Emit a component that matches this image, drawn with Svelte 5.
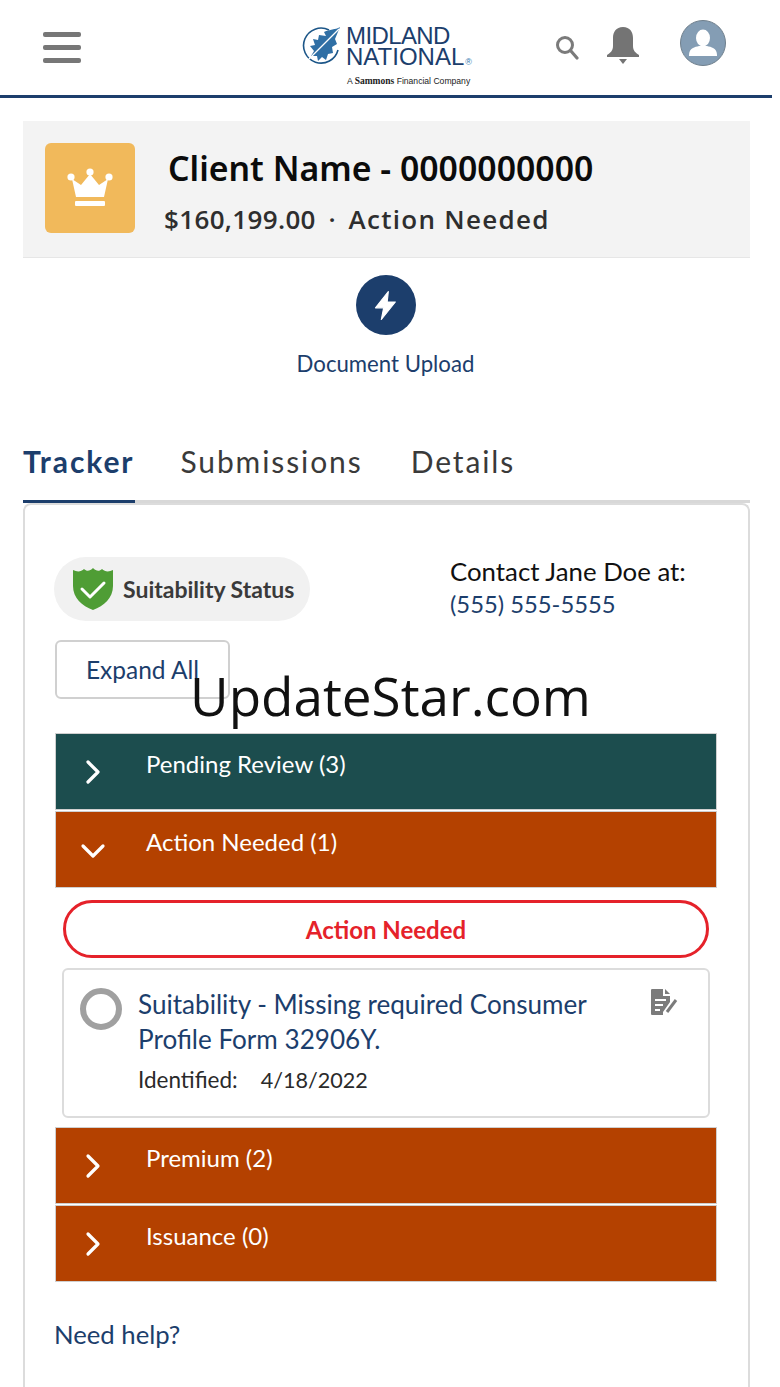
<script>
	const sections = [
		{ label: 'Pending Review (3)', tone: 'teal', open: false },
		{ label: 'Action Needed (1)', tone: 'rust', open: true },
		{ label: 'Premium (2)', tone: 'rust', open: false },
		{ label: 'Issuance (0)', tone: 'rust', open: false }
	];
</script>

<div class="page">
	<header>
		<div class="burger"><span></span><span></span><span></span></div>
		<div class="logo">
			<svg class="leaf" viewBox="0 0 40 40" width="40" height="40">
				<path d="M27 4 A17.5 17.5 0 1 0 36 24" fill="none" stroke="#1c5688" stroke-width="1.6" />
				<path d="M38 1 C33 4 28 3 22 6 L24 10 L17 9 L16 14 L11 13 L13 19 L8 20 L12 25 L9 30 L15 30 L16 35 L20 31 L24 34 L26 28 L31 27 L30 21 L35 18 L33 13Z" fill="#2f6fa5" />
				<path d="M3 37 L37 3" stroke="#fff" stroke-width="1.2" />
			</svg>
			<div class="wordmark">
				<div class="mark-line">MIDLAND</div>
				<div class="mark-line wide">NATIONAL<span class="dot">®</span></div>
				<div class="tagline">A <b>Sammons</b> Financial Company</div>
			</div>
		</div>
		<div class="tools">
			<svg class="search" viewBox="0 0 26 26" width="26" height="26">
				<circle cx="11" cy="11" r="7.5" fill="none" stroke="#7b7b7b" stroke-width="3" />
				<path d="M16.5 16.5 L23 24" stroke="#7b7b7b" stroke-width="3.2" stroke-linecap="round" />
			</svg>
			<svg class="bell" viewBox="0 0 36 40" width="36" height="40">
				<path d="M18 1 C11 1 8 6 8 12 L8 20 C8 25 5 27 2 29 L2 31 L34 31 L34 29 C31 27 28 25 28 20 L28 12 C28 6 25 1 18 1Z" fill="#747474" />
				<path d="M14 33 L22 33 L18 38Z" fill="#747474" />
			</svg>
			<svg class="avatar" viewBox="0 0 46 46" width="46" height="46">
				<circle cx="23" cy="23" r="22.5" fill="#849db4" stroke="#6f7f8c" stroke-width="1" />
				<ellipse cx="23" cy="18" rx="7" ry="8.5" fill="#fff" />
				<path d="M9 35 C9 28 15 27 19 26 L27 26 C31 27 37 28 37 35 L37 36 L9 36Z" fill="#fff" />
			</svg>
		</div>
	</header>

	<main>
		<section class="client">
			<div class="crown">
				<svg viewBox="0 0 46 40" width="46" height="40">
					<circle cx="4" cy="9" r="3.6" fill="#fff" />
					<circle cx="23" cy="4" r="3.6" fill="#fff" />
					<circle cx="42" cy="9" r="3.6" fill="#fff" />
					<path d="M5 11 L14 17 L23 6 L32 17 L41 11 L37 29 L9 29Z" fill="#fff" />
					<rect x="8" y="33" width="30" height="5" rx="1" fill="#fff" />
				</svg>
			</div>
			<div class="client-text">
				<h1>Client Name - 0000000000</h1>
				<p><span class="amount">$160,199.00</span> <span class="sep">·</span> <span class="state">Action Needed</span></p>
			</div>
		</section>

		<div class="quick">
			<div class="bolt">
				<svg viewBox="0 0 24 28" width="28" height="33">
					<path d="M14 2 L3 16 L10 16 L8 26 L20 11 L13 11Z" fill="#fff" stroke="#fff" stroke-width="1" stroke-linejoin="round" />
				</svg>
			</div>
			<div class="quick-label">Document Upload</div>
		</div>

		<nav>
			<div class="tab active">Tracker</div>
			<div class="tab">Submissions</div>
			<div class="tab">Details</div>
		</nav>

		<section class="card">
			<div class="status-row">
				<div class="pill">
					<svg viewBox="0 0 42 46" width="42" height="46">
						<path d="M21 2 C24 5 27 6 30 3 C33 6 37 6 41 4 L41 20 C41 32 32 40 21 44 C10 40 1 32 1 20 L1 4 C5 6 9 6 12 3 C15 6 18 5 21 2Z" fill="#4f9d35" />
						<path d="M10 23 L18 31 L32 17" fill="none" stroke="#fff" stroke-width="3" stroke-linecap="round" stroke-linejoin="round" />
					</svg>
					<span>Suitability Status</span>
				</div>
				<div class="contact">
					<div>Contact Jane Doe at:</div>
					<div class="phone">(555) 555-5555</div>
				</div>
			</div>

			<button class="expand">Expand All</button>

			<div class="accordion">
				{#each sections as s}
					<div class="bar {s.tone}">
						<svg class="chevron" viewBox="0 0 30 30" width="30" height="30">
							{#if s.open}
								<path d="M5 11 L15 21 L25 11" fill="none" stroke="#fff" stroke-width="3.2" stroke-linecap="round" stroke-linejoin="round" />
							{:else}
								<path d="M10 5 L20 15 L10 25" fill="none" stroke="#fff" stroke-width="3.2" stroke-linecap="round" stroke-linejoin="round" />
							{/if}
						</svg>
						<span>{s.label}</span>
					</div>
					{#if s.open}
						<div class="panel">
							<div class="alert">Action Needed</div>
							<div class="task">
								<div class="radio"></div>
								<div class="task-body">
									<div class="task-title">Suitability - Missing required Consumer Profile Form 32906Y.</div>
									<div class="task-date"><span>Identified:</span><span>4/18/2022</span></div>
								</div>
								<svg class="doc" viewBox="0 0 30 28" width="30" height="28">
									<path d="M2 2 C2 1 3 1 3 1 L14 1 L14 8 L21 8 L21 14 L14 24 L14 27 L3 27 C2 27 2 26 2 26Z" fill="#7b7b7b" />
									<path d="M16 1 L21 6 L16 6Z" fill="#7b7b7b" />
									<path d="M6 12 H17 M6 17 H14 M6 22 H11" stroke="#fff" stroke-width="2" />
									<path d="M18 24 L27 12" stroke="#7b7b7b" stroke-width="3" />
								</svg>
							</div>
						</div>
					{/if}
				{/each}
			</div>

			<div class="help">Need help?</div>
		</section>
	</main>

	<div class="watermark">UpdateStar.com</div>
</div>

<style>
	:global(body) {
		margin: 0;
		background: #fff;
		overflow: hidden;
	}

	.page {
		position: relative;
		width: 780px;
		height: 1387px;
		overflow: hidden;
		font-family: Lato, sans-serif;
	}

	header {
		width: 772px;
		height: 95px;
		border-bottom: 3px solid #1c3e6c;
		position: relative;
		display: flex;
		align-items: flex-start;
		box-sizing: content-box;
	}

	.burger {
		display: flex;
		flex-direction: column;
		gap: 8px;
		margin: 32px 0 0 43px;
		width: 38px;
	}

	.burger span {
		display: block;
		height: 5px;
		background: #777;
		border-radius: 2px;
	}

	.logo {
		display: flex;
		margin: 25px 0 0 221px;
		width: 172px;
	}

	.leaf {
		flex: none;
		margin: 1px 4px 0 0;
	}

	.wordmark {
		color: #1c3e6c;
	}

	.mark-line {
		font-family: "Liberation Sans", sans-serif;
		font-size: 24px;
		line-height: 21px;
		letter-spacing: -0.6px;
		white-space: nowrap;
	}

	.mark-line.wide {
		letter-spacing: 0;
	}

	.dot {
		color: #2f79b0;
		font-size: 9px;
		margin-left: 1px;
	}

	.tagline {
		font-family: "Liberation Sans", sans-serif;
		font-size: 8.6px;
		line-height: 12px;
		margin-top: 2px;
		color: #222;
		margin-left: 1px;
		white-space: nowrap;
	}

	.tagline b {
		font-family: "Liberation Serif", serif;
		font-size: 9.5px;
	}

	.tools {
		display: flex;
		align-items: flex-start;
		margin-left: 80px;
	}

	.search {
		margin-top: 34px;
	}

	.bell {
		margin: 26px 0 0 25px;
	}

	.avatar {
		margin: 20px 0 0 39px;
	}

	main {
		width: 727px;
		margin-left: 23px;
	}

	.client {
		margin-top: 23px;
		height: 137px;
		background: #f3f3f3;
		display: flex;
		align-items: flex-start;
		box-sizing: border-box;
		border-bottom: 1px solid #e6e6e6;
	}

	.crown {
		width: 90px;
		height: 90px;
		margin: 22px 0 0 22px;
		background: #f1b95b;
		border-radius: 6px;
		display: flex;
		align-items: center;
		justify-content: center;
		flex: none;
	}

	.client-text {
		margin: 25px 0 0 30px;
	}

	h1 {
		margin: 0 0 0 3px;
		font-family: "Noto Sans", sans-serif;
		font-size: 33.85px;
		line-height: 44px;
		font-weight: 600;
		color: #0b0b0b;
		white-space: nowrap;
	}

	.client-text p {
		margin: 14px 0 0;
		font-family: "Open Sans", sans-serif;
		font-size: 26px;
		line-height: 30px;
		font-weight: 600;
		color: #2e2e2e;
		white-space: nowrap;
	}

	.amount {
		letter-spacing: 0.35px;
		margin-left: -1px;
	}

	.state {
		letter-spacing: 1.3px;
	}

	.sep {
		margin: 0 6px;
	}

	.quick {
		display: flex;
		flex-direction: column;
		align-items: center;
		margin-top: 17px;
		padding-right: 2px;
	}

	.bolt {
		width: 60px;
		height: 60px;
		border-radius: 50%;
		background: #1c3e6c;
		display: flex;
		align-items: center;
		justify-content: center;
	}

	.quick-label {
		margin-top: 15px;
		font-size: 22.2px;
		line-height: 28px;
		color: #1c3e6c;
	}

	nav {
		display: flex;
		margin-top: 59px;
		border-bottom: 3px solid #d8d8d8;
		height: 63px;
		box-sizing: content-box;
	}

	.tab {
		font-size: 30px;
		line-height: 44px;
		letter-spacing: 1.9px;
		color: #3a3a3a;
		margin-right: 48px;
		padding-top: 2px;
		height: 59px;
		box-sizing: border-box;
	}

	.tab.active {
		color: #1c3e6c;
		font-weight: 700;
		margin-right: 45px;
		height: 66px;
		border-bottom: 3px solid #1c3e6c;
		padding-right: 1px;
	}

	.card {
		border: 2px solid #dcdcdc;
		border-bottom: none;
		border-radius: 8px 8px 0 0;
		padding: 0 30px;
		height: 900px;
		box-sizing: border-box;
		margin-top: 0;
	}

	.status-row {
		display: flex;
		justify-content: space-between;
		align-items: flex-start;
		padding-top: 52px;
	}

	.pill {
		display: flex;
		align-items: center;
		gap: 9px;
		width: 256px;
		height: 64px;
		margin-left: -1px;
		padding-left: 18px;
		box-sizing: border-box;
		border-radius: 32px;
		background: #f1f1f1;
		font-size: 23px;
		font-weight: 700;
		color: #3a3a3a;
	}

	.contact {
		width: 268px;
		margin-top: -2px;
		font-size: 25.8px;
		line-height: 33px;
		color: #111;
		white-space: nowrap;
	}

	.phone {
		color: #1c3e6c;
		font-size: 23.8px;
	}

	.expand {
		display: block;
		margin-top: 19px;
		width: 175px;
		height: 59px;
		background: #fff;
		border: 2px solid #d0d0d0;
		border-radius: 6px;
		font-family: Lato, sans-serif;
		font-size: 24.5px;
		color: #1c3e6c;
		padding: 0;
	}

	.accordion {
		margin-top: 35px;
		width: 662px;
	}

	.bar {
		height: 75px;
		display: flex;
		align-items: flex-start;
		margin-bottom: 3px;
		color: #fff;
		font-size: 24px;
		box-shadow: 0 0 0 1px #cfcfcf;
		margin-left: 1px;
		margin-right: 1px;
	}

	.bar span {
		margin: 14px 0 0 38px;
		line-height: 32px;
	}

	.chevron {
		margin: 23px 0 0 22px;
		flex: none;
	}

	.teal {
		background: #1c4d4e;
	}

	.rust {
		background: #b44100;
	}

	.panel {
		padding: 10px 8px 10px;
	}

	.alert {
		height: 58px;
		box-sizing: border-box;
		border: 3px solid #e5222a;
		border-radius: 30px;
		margin-bottom: 10px;
		display: flex;
		align-items: center;
		justify-content: center;
		font-size: 24px;
		font-weight: 700;
		color: #e5222a;
	}

	.task {
		position: relative;
		display: flex;
		height: 150px;
		box-sizing: border-box;
		border: 2px solid #dcdcdc;
		border-radius: 6px;
		margin: 0 -1px 0 -1px;
		padding: 18px 0 0 16px;
	}

	.radio {
		width: 42px;
		height: 42px;
		box-sizing: border-box;
		border: 6px solid #a0a0a0;
		border-radius: 50%;
		flex: none;
	}

	.task-body {
		margin-left: 16px;
		width: 470px;
	}

	.task-title {
		font-size: 26.1px;
		line-height: 35px;
		color: #1c3e6c;
		margin-top: -1px;
	}

	.task-date {
		display: flex;
		gap: 23px;
		font-size: 22.5px;
		line-height: 30px;
		color: #2a2a2a;
		margin-top: 8px;
	}

	.task-date span:last-child {
		font-size: 21.6px;
	}

	.doc {
		margin-left: 41px;
	}

	.help {
		margin-top: 36px;
		margin-left: -1px;
		font-size: 25.7px;
		line-height: 34px;
		color: #1c3e6c;
	}

	.watermark {
		position: absolute;
		left: 190px;
		top: 659px;
		font-family: "Open Sans", sans-serif;
		font-size: 53px;
		line-height: 74px;
		color: #111;
		white-space: nowrap;
	}
</style>
